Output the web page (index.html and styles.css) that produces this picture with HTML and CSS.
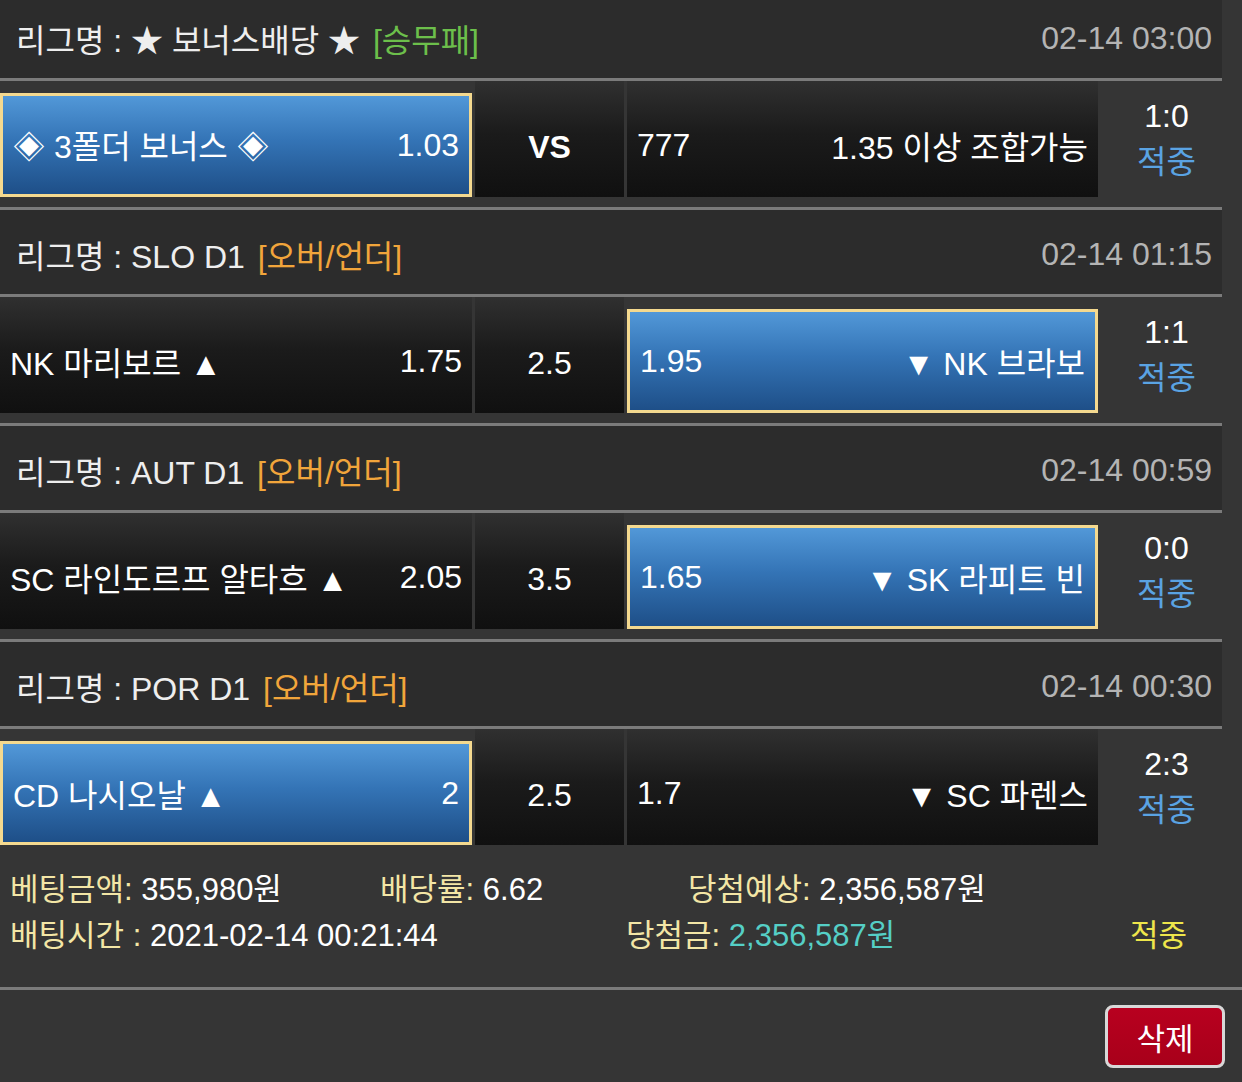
FILE: index.html
```html
<!DOCTYPE html>
<html lang="ko">
<head>
    <meta charset="UTF-8">
    <meta name="viewport" content="width=device-width, initial-scale=1.0">
    <link rel="stylesheet" href="styles.css">
</head>
<body>
    <div class="slip">
        <div class="league">
            <div class="league-name">리그명 : ★ 보너스배당 ★ <span class="tag tag-green">[승무패]</span></div>
            <div class="league-time">02-14 03:00</div>
        </div>
        <div class="match">
            <div class="pick selected">
                <span>◈ 3폴더 보너스 ◈</span>
                <span>1.03</span>
            </div>
            <div class="pick pick-mid vs">VS</div>
            <div class="pick">
                <span>777</span>
                <span>1.35 이상 조합가능</span>
            </div>
            <div class="result">
                <div>1:0</div>
                <div class="result-hit">적중</div>
            </div>
        </div>

        <div class="league">
            <div class="league-name">리그명 : SLO D1 <span class="tag tag-orange">[오버/언더]</span></div>
            <div class="league-time">02-14 01:15</div>
        </div>
        <div class="match">
            <div class="pick">
                <span>NK 마리보르 ▲</span>
                <span>1.75</span>
            </div>
            <div class="pick pick-mid">2.5</div>
            <div class="pick selected">
                <span>1.95</span>
                <span>▼ NK 브라보</span>
            </div>
            <div class="result">
                <div>1:1</div>
                <div class="result-hit">적중</div>
            </div>
        </div>

        <div class="league">
            <div class="league-name">리그명 : AUT D1 <span class="tag tag-orange">[오버/언더]</span></div>
            <div class="league-time">02-14 00:59</div>
        </div>
        <div class="match">
            <div class="pick">
                <span>SC 라인도르프 알타흐 ▲</span>
                <span>2.05</span>
            </div>
            <div class="pick pick-mid">3.5</div>
            <div class="pick selected">
                <span>1.65</span>
                <span>▼ SK 라피트 빈</span>
            </div>
            <div class="result">
                <div>0:0</div>
                <div class="result-hit">적중</div>
            </div>
        </div>

        <div class="league">
            <div class="league-name">리그명 : POR D1 <span class="tag tag-orange">[오버/언더]</span></div>
            <div class="league-time">02-14 00:30</div>
        </div>
        <div class="match">
            <div class="pick selected">
                <span>CD 나시오날 ▲</span>
                <span>2</span>
            </div>
            <div class="pick pick-mid">2.5</div>
            <div class="pick">
                <span>1.7</span>
                <span>▼ SC 파렌스</span>
            </div>
            <div class="result">
                <div>2:3</div>
                <div class="result-hit">적중</div>
            </div>
        </div>
    </div>

    <div class="summary">
        <div class="summary-row">
            <div class="summary-item item-amount"><span class="label">베팅금액:</span> 355,980원</div>
            <div class="summary-item item-rate"><span class="label">배당률:</span> 6.62</div>
            <div class="summary-item"><span class="label">당첨예상:</span> 2,356,587원</div>
        </div>
        <div class="summary-row">
            <div class="summary-item item-time"><span class="label">배팅시간 :</span> 2021-02-14 00:21:44</div>
            <div class="summary-item item-prize"><span class="label">당첨금:</span> <span class="prize">2,356,587원</span></div>
            <div class="summary-item summary-hit">적중</div>
        </div>
    </div>

    <div class="actions">
        <button class="delete-button">삭제</button>
    </div>
</body>
</html>
```

FILE: styles.css
```css
html, body {
    margin: 0;
    padding: 0;
}

body {
    background-color: #353535;
    color: white;
    font-family: "Liberation Sans", "Noto Sans CJK KR", sans-serif;
    font-size: 32px;
    width: 1242px;
    overflow: hidden;
}

.slip {
    width: 1222px;
    margin-top: -6px; /* top of first header is cut off */
}

.league {
    height: 87px;
    box-sizing: border-box;
    background-color: #2c2c2c;
    border-bottom: 3px solid #7b7b7b;
    padding: 4px 10px 0 16px;
    display: flex;
    align-items: center;
    justify-content: space-between;
}

.league-name {
    color: #eeeeee;
}

.tag {
    margin-left: 4px;
}

.tag-green {
    color: #6cbf4b;
}

.tag-orange {
    color: #f1a53b;
}

.league-time {
    color: #b4b4b4;
}

.match {
    height: 129px;
    box-sizing: border-box;
    padding-bottom: 10px;
    border-bottom: 3px solid #7b7b7b;
    display: grid;
    grid-template-columns: 472px 149px 471px 1fr;
    column-gap: 3px;
    align-items: end;
}

.match:last-child {
    border-bottom: none;
    height: 126px;
}

.pick {
    height: 116px;
    box-sizing: border-box;
    padding: 12px 10px 0 10px;
    background: linear-gradient(to bottom, #303030 0%, #1b1b1b 45%, #101010 100%);
    display: flex;
    align-items: center;
    justify-content: space-between;
    white-space: nowrap;
}

.pick-mid {
    justify-content: center;
    padding-top: 16px;
}

.vs {
    font-weight: bold;
}

.pick.selected {
    height: 104px;
    padding-top: 0;
    border: 3px solid #f4d98f;
    background: linear-gradient(to bottom, #5298d8 0%, #3474b6 45%, #1e4f88 100%);
}

.result {
    align-self: start;
    padding: 12px 0 0 10px;
    text-align: center;
    line-height: 46px;
}

.result-hit {
    color: #5aa3e3;
}

.summary {
    padding: 12px 0 28px 10px;
    border-bottom: 3px solid #7b7b7b;
    font-size: 31px;
    line-height: 46px;
}

.summary-row {
    display: flex;
    white-space: nowrap;
}

.label {
    color: #f3e6a6;
}

.item-amount {
    width: 370px;
}

.item-rate {
    width: 308px;
}

.item-time {
    width: 616px;
}

.item-prize {
    width: 504px;
}

.prize {
    color: #55cfc6;
}

.summary-hit {
    color: #eee64b;
}

.actions {
    display: flex;
    justify-content: flex-end;
    padding: 15px 17px 0 0;
}

.delete-button {
    width: 120px;
    height: 63px;
    border: 3px solid #d8d8d8;
    border-radius: 8px;
    background: linear-gradient(to bottom, #b8001f, #a8001a);
    color: white;
    font-family: "Liberation Sans", "Noto Sans CJK KR", sans-serif;
    font-size: 31px;
    padding: 0;
}
```
